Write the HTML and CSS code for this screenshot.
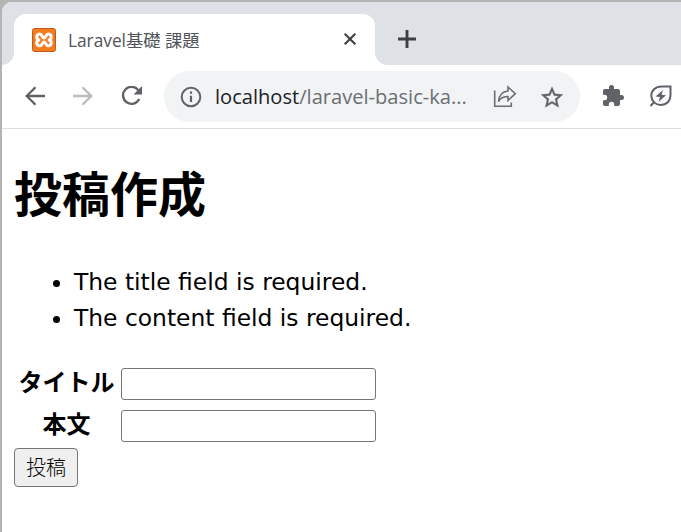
FILE: index.html
```html
<!DOCTYPE html>
<html lang="ja">
<head>
<meta charset="utf-8">
<title>Laravel基礎 課題</title>
<link rel="stylesheet" href="styles.css">
</head>
<body>
<div class="window">
  <header class="tabs">
    <div class="tab">
      <svg class="favicon" width="24" height="24" viewBox="0 0 24 24"><rect x=".5" y=".5" width="23" height="23" rx="2" fill="#f47b20" stroke="#bf5a18"/><path d="M9 6.500C5.500 4.500 3 9 6.500 12 3 15 5.500 19 9 17.300 11 16.200 10.300 14 12 14S13.500 16.200 15 17.300C18.500 19 21 15 17.500 12 21 9 18.500 4.500 15 6.500 13.500 7.400 14 10 12 10S10.500 7.400 9 6.500Z" fill="none" stroke="#fff" stroke-width="3"/></svg>
      <span class="tab-title">Laravel基礎 課題</span>
      <svg class="close" width="14" height="14" viewBox="0 0 14 14"><path d="M1.700 1.700 12.300 12.300M12.300 1.700 1.700 12.300" stroke="#3c4043" stroke-width="2.100"/></svg>
    </div>
    <svg class="plus" width="18" height="18" viewBox="0 0 18 18"><path d="M9 0V18M0 9H18" stroke="#3c4043" stroke-width="2.900"/></svg>
  </header>
  <nav class="toolbar">
    <svg class="back" width="20" height="20" viewBox="0 0 20 20"><path d="M20 10H2M10.500 1.200 1.700 10 10.500 18.800" fill="none" stroke="#5f6368" stroke-width="2.300"/></svg>
    <svg class="forward" width="20" height="20" viewBox="0 0 20 20"><path d="M0 10H18M9.500 1.200 18.300 10 9.500 18.800" fill="none" stroke="#babcbe" stroke-width="2.300"/></svg>
    <svg class="reload" width="22" height="20" viewBox="0 0 22 20"><path d="M17.300 4.200A8.500 8.500 0 1 0 18.200 13" fill="none" stroke="#5f6368" stroke-width="2.400"/><path d="M21 0V8.500H12.500Z" fill="#5f6368"/></svg>
    <div class="address">
      <svg class="info" width="22" height="22" viewBox="0 0 22 22"><circle cx="11" cy="11" r="9.300" fill="none" stroke="#5f6368" stroke-width="2"/><path d="M11 9.700V16M11 5.500V7.800" stroke="#5f6368" stroke-width="2.200"/></svg>
      <span class="url">localhost<span class="path">/laravel-basic-ka...</span></span>
      <svg class="share" width="24" height="24" viewBox="0 0 24 24"><path d="M1.700 5.500V21.200H18.300V17.500" fill="none" stroke="#6b6f73" stroke-width="1.600"/><path d="M15 2 22.300 8.700 15 15.500V11.500C10.500 11.500 7.500 13 5.500 16.500 6 10.500 9.500 6.500 15 6Z" fill="none" stroke="#6b6f73" stroke-width="1.600"/></svg>
      <svg class="star" width="24" height="24" viewBox="1 0.500 22 22"><path d="M22 9.240l-7.190-.62L12 2 9.190 8.630 2 9.240l5.460 4.730L5.820 21 12 17.270 18.180 21l-1.630-7.030L22 9.240zM12 15.400l-3.760 2.270 1-4.280-3.320-2.880 4.380-.38L12 6.100l1.710 4.040 4.380.38-3.320 2.880 1 4.280L12 15.400z" fill="#5f6368" stroke="#5f6368" stroke-width=".3"/></svg>
    </div>
    <svg class="puzzle" width="24" height="24" viewBox="0 0 24 24"><path d="M20.500 11H19V7c0-1.100-.9-2-2-2h-4V3.500a2.500 2.500 0 0 0-5 0V5H4c-1.100 0-2 .9-2 2v3.800h1.500a2.700 2.700 0 0 1 0 5.400H2V20c0 1.100.9 2 2 2h3.800v-1.500a2.700 2.700 0 0 1 5.400 0V22H17c1.100 0 2-.9 2-2v-4h1.500a2.500 2.500 0 0 0 0-5z" fill="#5f6368"/></svg>
    <svg class="leaf" width="24" height="24" viewBox="0 0 24 24"><path d="M21.500 2.500H13C6 2.500 2.300 6.500 2.300 12A9.300 9.300 0 0 0 11.500 21C17.500 21 21.500 17 21.500 11ZM5.200 18 1.500 22" fill="none" stroke="#5f6368" stroke-width="2"/><path d="M14 6 6.500 12.500 11 13 9.500 18 17 11.300 12.500 10.800Z" fill="#5f6368"/></svg>
  </nav>
  <main>
    <h1>投稿作成</h1>
    <ul>
      <li>The title field is required.</li>
      <li>The content field is required.</li>
    </ul>
    <form>
      <div class="fields">
        <label for="title">タイトル</label><input id="title" type="text">
        <label for="content">本文</label><input id="content" type="text">
      </div>
      <button type="button">投稿</button>
    </form>
  </main>
</div>
</body>
</html>
```
FILE: styles.css
```css
* { box-sizing: border-box; }
html { background: #b4b4b4; }
body { margin: 0; height: 532px; overflow: hidden; padding: 2px 0 0 2px; font-family: "Noto Sans", "Noto Sans CJK JP", sans-serif; color: #000; }
svg { display: block; flex: none; }
.window { height: 530px; background: #fff; border-top-left-radius: 10px; overflow: hidden; }
.tabs { height: 63px; background: #dee1e6; display: flex; padding: 12px 0 0 12px; }
.tab { position: relative; width: 361px; height: 51px; background: #fff; border-radius: 12px 12px 0 0; display: flex; align-items: center; padding: 0 18px; }
.tab::before, .tab::after { content: ""; position: absolute; bottom: 0; width: 12px; height: 12px; }
.tab::before { left: -12px; background: radial-gradient(circle at 0 0, #dee1e6 11.5px, #fff 12px); }
.tab::after { right: -12px; background: radial-gradient(circle at 100% 0, #dee1e6 11.5px, #fff 12px); }
.tab-title { margin-left: 12px; font-family: "Open Sans", "Noto Sans CJK JP", sans-serif; font-size: 17.3px; color: #505458; white-space: nowrap; }
.close { margin: -2px 0 0 auto; }
.plus { margin: 16px 0 0 23px; }
.toolbar { height: 64px; display: flex; align-items: center; border-bottom: 1px solid #dadce0; padding-left: 23px; }
.back, .forward, .reload { margin-top: -2px; }
.forward { margin-left: 28px; }
.reload { margin-left: 28px; }
.address { margin-left: 21px; width: 416px; height: 51px; border-radius: 26px; background: #f1f3f4; display: flex; align-items: center; padding-left: 16px; }
.url { margin-left: 13px; width: 252px; font-family: "Open Sans", sans-serif; font-size: 20.1px; color: #202124; white-space: nowrap; }
.path { color: #6b6f73; }
.share { margin-left: 26px; }
.star { margin-left: 23px; }
.puzzle { margin-left: 21px; }
.leaf { margin-left: 24px; }
.puzzle, .leaf { margin-top: -2px; }
main { padding: 26px 12px; }
h1 { margin: 0; font-family: "Noto Sans CJK JP", sans-serif; font-size: 48px; line-height: 72px; font-weight: 700; }
ul { margin: 37px 0 0; padding: 0 0 0 60px; font-family: "DejaVu Sans", sans-serif; font-size: 23.4px; line-height: 36px; }
.fields { display: grid; grid-template-columns: 102px 255px; column-gap: 5px; row-gap: 10px; margin-top: 32px; }
label { font-family: "Noto Sans CJK JP", sans-serif; font-size: 24px; font-weight: 700; line-height: 25px; height: 32px; text-align: center; padding-left: 3px; white-space: nowrap; }
input { width: 255px; height: 32px; margin: 0; border: 1px solid #767676; border-radius: 3px; background: #fff; }
button { display: block; width: 64px; height: 39px; margin-top: 6px; padding: 0 0 3px; border: 1.5px solid #767676; border-radius: 4px; background: #efefef; color: #000; font-family: "Noto Sans CJK JP", sans-serif; font-size: 20px; font-weight: 300; }
```
